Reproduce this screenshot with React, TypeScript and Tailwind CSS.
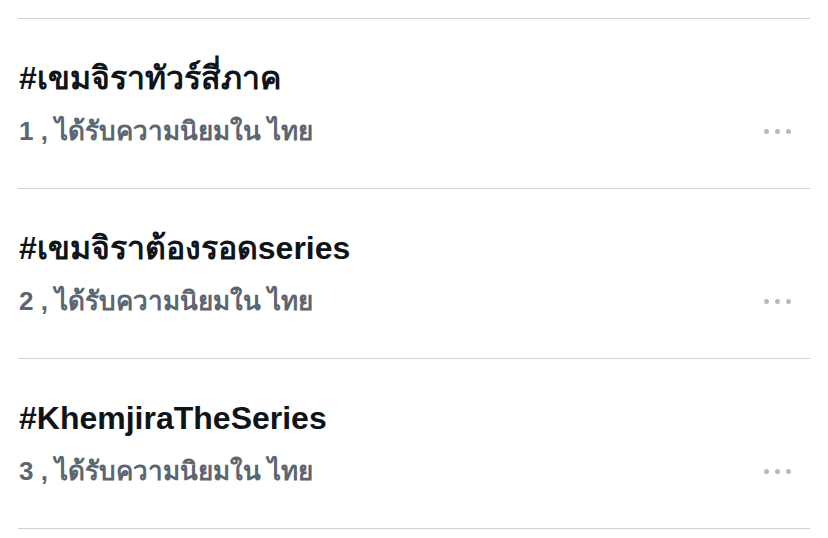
const trends = [
  { rank: 1, tag: "#เขมจิราทัวร์สี่ภาค" },
  { rank: 2, tag: "#เขมจิราต้องรอดseries" },
  { rank: 3, tag: "#KhemjiraTheSeries" },
];

function MoreDots() {
  return (
    <div className="flex gap-[6px] mr-[19px]" aria-label="More">
      <span className="w-[5px] h-[5px] rounded-full bg-[#b3bbc3]" />
      <span className="w-[5px] h-[5px] rounded-full bg-[#b3bbc3]" />
      <span className="w-[5px] h-[5px] rounded-full bg-[#b3bbc3]" />
    </div>
  );
}

export default function App() {
  return (
    <main className="w-[828px] h-[538px] bg-white pt-[18px] overflow-hidden font-['Liberation_Sans',_'Noto_Sans',_sans-serif]">
      <div className="mx-[18px] border-t border-[#cfd3d6]">
        {trends.map((t) => (
          <div key={t.rank} className="h-[170px] border-b border-[#cfd3d6] flex flex-col pl-[1px] pt-[40px]">
            <h2 className="text-[32px] leading-[38px] font-bold text-[#0f1419]">{t.tag}</h2>
            <div className="flex items-center justify-between mt-[19px]">
              <p className="text-[26px] leading-[30px] font-bold text-[#5b6670]">
                {t.rank} , ได้รับความนิยมใน ไทย
              </p>
              <MoreDots />
            </div>
          </div>
        ))}
      </div>
    </main>
  );
}
